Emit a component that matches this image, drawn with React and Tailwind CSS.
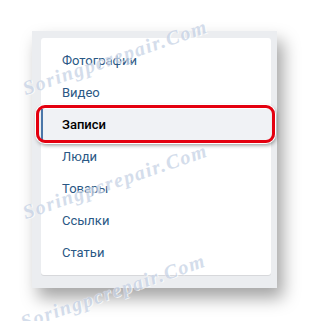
const items = ['Фотографии', 'Видео', 'Записи', 'Люди', 'Товары', 'Ссылки', 'Статьи'];

function Watermark({ className }) {
  return (
    <span
      className={`pointer-events-none absolute whitespace-nowrap font-['Liberation_Serif',serif] text-[20px] font-bold italic tracking-[1.5px] text-[#c6d2e5] opacity-75 [text-shadow:0_0_1px_#fff,1px_1px_0_#fff] rotate-[-19deg] ${className}`}
    >
      Soringpcrepair.Com
    </span>
  );
}

export default function App() {
  return (
    <div className="relative h-[321px] w-[309px] overflow-hidden bg-white font-['Roboto',sans-serif]">
      <div className="pl-[32px] pt-[31px]">
        <div className="h-[257px] w-[245px] bg-[#ebedf0] pl-[9px] pt-[7px] shadow-[6px_10px_16px_rgba(0,0,0,0.36)]">
          <div className="h-[237px] w-[230px] rounded-[3px] bg-white pt-[7px] shadow-[0_1px_0_#d7d8db]">
            {items.map((item) => {
              const active = item === 'Записи';
              return (
                <div
                  key={item}
                  className={
                    active
                      ? 'relative h-[32px] border-l-2 border-[#4a76a8] bg-[#f0f2f5] pl-[19px] text-[13px] leading-[32px] font-medium text-black'
                      : 'h-[32px] pl-[21px] text-[13px] leading-[32px] text-[#2a5885]'
                  }
                >
                  {item}
                  {active && (
                    <div className="absolute left-[-7px] top-[-4px] h-[38px] w-[239px] rounded-[9px] border-[3px] border-[#e4000f] shadow-[0_0_0_1px_#fff,1px_2px_4px_rgba(0,0,0,0.45)]" />
                  )}
                </div>
              );
            })}
          </div>
        </div>
      </div>
      <Watermark className="left-[18px] top-[42px]" />
      <Watermark className="left-[18px] top-[166px]" />
      <Watermark className="left-[16px] top-[276px]" />
    </div>
  );
}
